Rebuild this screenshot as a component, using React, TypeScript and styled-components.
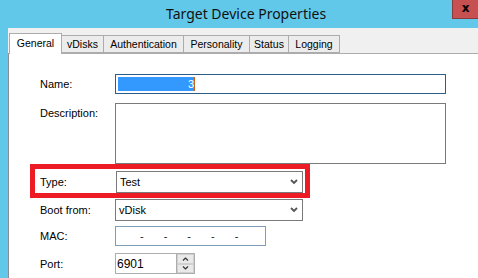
import React from "react";
import styled, { createGlobalStyle } from "styled-components";

const GlobalStyle = createGlobalStyle`
  html, body {
    margin: 0;
    padding: 0;
    overflow: hidden;
  }
  body {
    font-family: "Liberation Sans", Arial, sans-serif;
    font-size: 11px;
    color: #000;
  }
`;

const Window = styled.div`
  width: 478px;
  height: 278px;
  background: #61c8ea;
  display: flex;
  flex-direction: column;
  overflow: hidden;
`;

const TitleBar = styled.div`
  height: 28px;
  display: flex;
  align-items: flex-start;
  flex-shrink: 0;
`;

const Title = styled.div`
  margin-left: 166px;
  margin-top: 4px;
  font-family: "Noto Sans", "Open Sans", sans-serif;
  font-size: 14px;
  color: #111;
  white-space: nowrap;
`;

const CloseButton = styled.div`
  margin-left: auto;
  width: 26px;
  height: 19px;
  box-sizing: border-box;
  background: #c75050;
  border: 1px solid #8a3a3a;
  border-top: none;
  border-right: none;
  display: flex;
  align-items: center;
  justify-content: center;
  font-family: "DejaVu Sans", sans-serif;
  font-weight: bold;
  font-size: 12px;
  line-height: 1;
  color: #000;
  padding-bottom: 2px;
`;

const Body = styled.div`
  flex: 1;
  margin-left: 8px;
  background: #f0f0f0;
  display: flex;
  flex-direction: column;
  padding-top: 5px;
`;

const TabStrip = styled.div`
  display: flex;
  align-items: flex-end;
  padding-left: 1px;
  height: 20px;
  position: relative;
  z-index: 1;
`;

const Tab = styled.div<{ $w: number; $active?: boolean }>`
  width: ${(p) => p.$w}px;
  height: ${(p) => (p.$active ? 21 : 18)}px;
  margin-bottom: ${(p) => (p.$active ? -1 : 0)}px;
  margin-left: ${(p) => (p.$active ? 0 : -1)}px;
  box-sizing: border-box;
  border: 1px solid #acacac;
  border-bottom: ${(p) => (p.$active ? "none" : "1px solid #acacac")};
  background: ${(p) => (p.$active ? "#fff" : "#ececec")};
  display: flex;
  align-items: center;
  justify-content: center;
  padding-bottom: ${(p) => (p.$active ? 2 : 0)}px;
  white-space: nowrap;
  font-size: 10.5px;
  z-index: ${(p) => (p.$active ? 2 : 1)};
  &:first-child {
    margin-left: 0;
  }
`;

const Panel = styled.div`
  flex: 1;
  background: #fff;
  border-top: 1px solid #acacac;
  border-left: 1px solid #898c95;
  display: flex;
  flex-direction: column;
  padding-top: 20px;
  padding-left: 31px;
`;

const Row = styled.div<{ $gap: number; $top?: boolean }>`
  display: flex;
  align-items: ${(p) => (p.$top ? "flex-start" : "center")};
  margin-top: ${(p) => p.$gap}px;
`;

const Label = styled.div<{ $offset?: number }>`
  width: 75px;
  flex-shrink: 0;
  padding-top: ${(p) => p.$offset || 0}px;
`;

const Highlight = styled.div`
  display: flex;
  align-items: center;
  width: 280px;
  box-sizing: border-box;
  margin-left: -10px;
  border: 5px solid #ed1c24;
  padding: 2px 2px 0 5px;
`;

const TextBox = styled.div<{ $w: number; $h: number; $border: string }>`
  width: ${(p) => p.$w}px;
  height: ${(p) => p.$h}px;
  box-sizing: border-box;
  border: 1px solid ${(p) => p.$border};
  background: #fff;
  display: flex;
  align-items: center;
`;

const Selection = styled.div`
  margin-left: 2px;
  width: 76px;
  height: 14px;
  background: #3399ff;
  color: #fff;
  display: flex;
  align-items: center;
  justify-content: flex-end;
  font-size: 11px;
  border-right: 1px solid #c0601a;
`;

const Select = styled.div<{ $shift?: number }>`
  width: 188px;
  height: 22px;
  margin-left: ${(p) => p.$shift || 0}px;
  box-sizing: border-box;
  border: 1px solid #7a7a7a;
  background: #fff;
  display: flex;
  align-items: center;
  padding: 0 4px 0 3px;
`;

const SelectValue = styled.span`
  flex: 1;
`;

const MacDashes = styled.div`
  display: flex;
  gap: 20px;
  margin-left: 24px;
  color: #222;
`;

const SpinBox = styled.div`
  width: 80px;
  height: 21px;
  box-sizing: border-box;
  border: 1px solid #adadad;
  background: #fff;
  display: flex;
  align-items: stretch;
`;

const SpinValue = styled.div`
  flex: 1;
  display: flex;
  align-items: center;
  padding-left: 1px;
  font-size: 12px;
`;

const SpinButtons = styled.div`
  width: 17px;
  display: flex;
  flex-direction: column;
  border-left: 1px solid #adadad;
`;

const SpinButton = styled.div`
  flex: 1;
  background: #e9e9e9;
  border: 1px solid #d0d0d0;
  display: flex;
  align-items: center;
  justify-content: center;
`;

const Chevron = () => (
  <svg width="8" height="6" viewBox="0 0 8 6">
    <polyline points="1,1 4,4 7,1" fill="none" stroke="#555" strokeWidth="1.8" />
  </svg>
);

const SmallArrow = ({ up }: { up?: boolean }) => (
  <svg width="7" height="4" viewBox="0 0 7 4">
    <polyline
      points={up ? "1,3.5 3.5,1 6,3.5" : "1,0.5 3.5,3 6,0.5"}
      fill="none"
      stroke="#333"
      strokeWidth="1.2"
    />
  </svg>
);

const tabs = [
  { name: "General", w: 53 },
  { name: "vDisks", w: 43 },
  { name: "Authentication", w: 81 },
  { name: "Personality", w: 67 },
  { name: "Status", w: 40 },
  { name: "Logging", w: 52 },
];

export default function App() {
  return (
    <>
      <GlobalStyle />
      <Window>
        <TitleBar>
          <Title>Target Device Properties</Title>
          <CloseButton>x</CloseButton>
        </TitleBar>
        <Body>
          <TabStrip>
            {tabs.map((t, i) => (
              <Tab key={t.name} $w={t.w} $active={i === 0}>
                {t.name}
              </Tab>
            ))}
          </TabStrip>
          <Panel>
            <Row $gap={0}>
              <Label>Name:</Label>
              <TextBox $w={331} $h={20} $border="#2b5d8a">
                <Selection>3</Selection>
              </TextBox>
            </Row>
            <Row $gap={9} $top>
              <Label $offset={4}>Description:</Label>
              <TextBox $w={331} $h={61} $border="#7a7a7a" />
            </Row>
            <Row $gap={0}>
              <Highlight>
                <Label>Type:</Label>
                <Select $shift={1}>
                  <SelectValue>Test</SelectValue>
                  <Chevron />
                </Select>
              </Highlight>
            </Row>
            <Row $gap={1}>
              <Label>Boot from:</Label>
              <Select>
                <SelectValue>vDisk</SelectValue>
                <Chevron />
              </Select>
            </Row>
            <Row $gap={5}>
              <Label>MAC:</Label>
              <TextBox $w={151} $h={20} $border="#7f9db9">
                <MacDashes>
                  <span>-</span>
                  <span>-</span>
                  <span>-</span>
                  <span>-</span>
                  <span>-</span>
                </MacDashes>
              </TextBox>
            </Row>
            <Row $gap={7}>
              <Label>Port:</Label>
              <SpinBox>
                <SpinValue>6901</SpinValue>
                <SpinButtons>
                  <SpinButton>
                    <SmallArrow up />
                  </SpinButton>
                  <SpinButton>
                    <SmallArrow />
                  </SpinButton>
                </SpinButtons>
              </SpinBox>
            </Row>
          </Panel>
        </Body>
      </Window>
    </>
  );
}
